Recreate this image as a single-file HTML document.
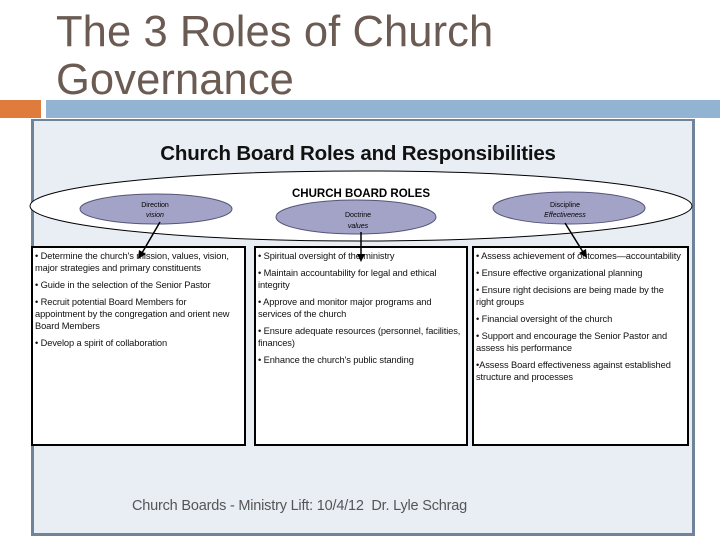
<!DOCTYPE html>
<html><head><meta charset="utf-8"><style>
body{margin:0;width:720px;height:540px;background:#fff;position:relative;overflow:hidden;font-family:"Liberation Sans",sans-serif}
.t{position:absolute;left:56px;color:#6b5b53;font-size:43.5px;line-height:48px;top:8px;letter-spacing:0.1px}
.box{position:absolute;top:246px;height:200px;background:#fff;border:2px solid #000;box-sizing:border-box;font-size:9.3px;line-height:12px;color:#111;padding:2px 2px;letter-spacing:-0.1px}
.box p{margin:0 0 5px 0}
.foot{position:absolute;left:132px;top:498px;font-size:14.5px;color:#555;letter-spacing:-0.2px}
</style></head><body>
<div class="t">The 3 Roles of Church<br>Governance</div>
<div style="position:absolute;left:0;top:100px;width:41px;height:18px;background:#e07b3e"></div>
<div style="position:absolute;left:46px;top:100px;width:674px;height:18px;background:#92b3d1"></div>
<div style="position:absolute;left:31px;top:119px;width:658px;height:412px;background:#e9eef5;border:3px solid #6f8499;border-top-width:2px"></div>
<div style="position:absolute;left:0;top:142px;width:716px;text-align:center;font-size:20.5px;font-weight:bold;color:#111;letter-spacing:-0.2px">Church Board Roles and Responsibilities</div>
<svg style="position:absolute;left:0;top:0" width="720" height="540">
<ellipse cx="361" cy="206" rx="331" ry="35" fill="#fff" stroke="#000" stroke-width="1"/>
<ellipse cx="156" cy="209" rx="76" ry="15" fill="#a3a3c7" stroke="#55557a"/>
<ellipse cx="356" cy="217" rx="80" ry="17" fill="#a3a3c7" stroke="#55557a"/>
<ellipse cx="569" cy="208" rx="76" ry="16" fill="#a3a3c7" stroke="#55557a"/>
<text x="361" y="197" font-size="11.5" font-weight="bold" text-anchor="middle" font-family="Liberation Sans">CHURCH BOARD ROLES</text>
<text x="155" y="207" font-size="7" text-anchor="middle" font-family="Liberation Sans">Direction</text>
<text x="155" y="217" font-size="7" font-style="italic" text-anchor="middle" font-family="Liberation Sans">vision</text>
<text x="358" y="217" font-size="7" text-anchor="middle" font-family="Liberation Sans">Doctrine</text>
<text x="358" y="228" font-size="7" font-style="italic" text-anchor="middle" font-family="Liberation Sans">values</text>
<text x="565" y="207" font-size="7" text-anchor="middle" font-family="Liberation Sans">Discipline</text>
<text x="565" y="217" font-size="7" font-style="italic" text-anchor="middle" font-family="Liberation Sans">Effectiveness</text>
</svg>
<div class="box" style="left:31px;width:215px"><p>• Determine the church's mission, values, vision,<br>major strategies and primary constituents</p><p>• Guide in the selection of the Senior Pastor</p><p>• Recruit potential Board Members for<br>appointment by the congregation and orient new<br>Board Members</p><p>• Develop a spirit of collaboration</p></div>
<div class="box" style="left:254px;width:214px"><p>• Spiritual oversight of the ministry</p><p>• Maintain accountability for legal and ethical<br>integrity</p><p>• Approve and monitor major programs and<br>services of the church</p><p>• Ensure adequate resources (personnel, facilities,<br>finances)</p><p>• Enhance the church's public standing</p></div>
<div class="box" style="left:472px;width:217px"><p>• Assess achievement of outcomes—accountability</p><p>• Ensure effective organizational planning</p><p>• Ensure right decisions are being made by the<br>right groups</p><p>• Financial oversight of the church</p><p>• Support and encourage the Senior Pastor and<br>assess his performance</p><p>•Assess Board effectiveness against established<br>structure and processes</p></div>
<svg style="position:absolute;left:0;top:0" width="720" height="540">
<line x1="160" y1="222" x2="142" y2="253" stroke="#000" stroke-width="1.5"/>
<polygon points="138,259 139,250 146,254" fill="#000"/>
<line x1="361" y1="232" x2="361" y2="255" stroke="#000" stroke-width="1.5"/>
<polygon points="361,262 357,254 365,254" fill="#000"/>
<line x1="565" y1="223" x2="583" y2="252" stroke="#000" stroke-width="1.5"/>
<polygon points="587,258 579,253 586,249" fill="#000"/>
</svg>
<div class="foot">Church Boards - Ministry Lift: 10/4/12&nbsp; Dr. Lyle Schrag</div>
</body></html>
